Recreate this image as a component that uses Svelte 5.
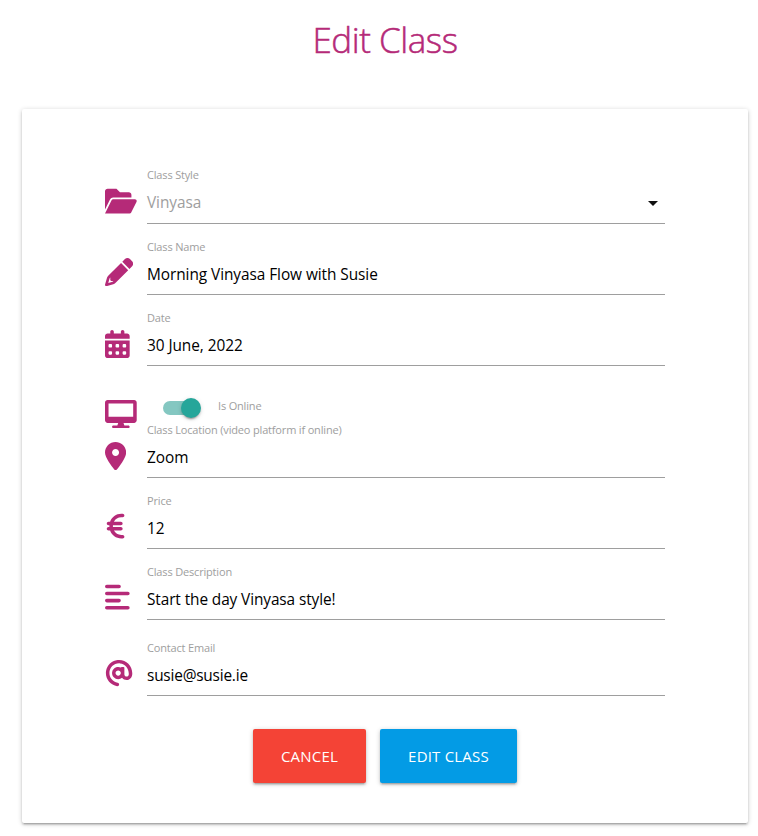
<script>
  const icons = {
    folder: { w: 576, d: 'M147.8 192H480V144C480 117.5 458.5 96 432 96h-160l-64-64h-160C21.49 32 0 53.49 0 80v328.4l90.54-181.1C101.4 205.6 123.4 192 147.8 192zM543.1 224H147.8C135.7 224 124.6 230.8 119.2 241.7L0 480h447.1c12.12 0 23.2-6.852 28.62-17.69l96-192C583.2 249 567.7 224 543.1 224z' },
    pencil: { w: 512, d: 'M421.7 220.3L188.5 453.4L154.6 419.5L158.1 416H112C103.2 416 96 408.8 96 400V353.9L92.51 357.4C87.78 362.2 84.31 368 82.42 374.4L59.44 452.6L137.6 429.6C143.1 427.7 149.8 424.2 154.6 419.5L188.5 453.4C178.1 463.8 165.2 471.5 151.1 475.6L30.77 511C22.35 513.5 13.24 511.2 7.03 504.1C.8198 498.8-1.502 489.7 .976 481.2L36.37 360.9C40.53 346.8 48.16 333.9 58.57 323.5L291.7 90.34L421.7 220.3zM492.7 58.75C517.7 83.74 517.7 124.3 492.7 149.3L444.3 197.7L314.3 67.72L362.7 19.32C387.7-5.678 428.3-5.678 453.3 19.32L492.7 58.75z' },
    calendar: { w: 448, d: 'M160 32V64H288V32C288 14.33 302.3 0 320 0C337.7 0 352 14.33 352 32V64H400C426.5 64 448 85.49 448 112V160H0V112C0 85.49 21.49 64 48 64H96V32C96 14.33 110.3 0 128 0C145.7 0 160 14.33 160 32zM0 192H448V464C448 490.5 426.5 512 400 512H48C21.49 512 0 490.5 0 464V192z' + [64, 192, 320].flatMap((x) => [256, 384].map((y) => `M${x} ${y + 48}c0 8.8 7.2 16 16 16h32c8.8 0 16-7.2 16-16v-32c0-8.8-7.2-16-16-16h-32c-8.8 0-16 7.2-16 16z`)).join('') },
    desktop: { w: 576, d: 'M528 0h-480C21.5 0 0 21.5 0 48v320C0 394.5 21.5 416 48 416h192L224 464H152C138.8 464 128 474.8 128 488S138.8 512 152 512h272c13.25 0 24-10.75 24-24s-10.75-24-24-24H352L336 416h192c26.5 0 48-21.5 48-48v-320C576 21.5 554.5 0 528 0zM512 304H64V64h448V304z' },
    location: { w: 384, d: 'M168.3 499.2C116.1 435 0 279.4 0 192C0 85.96 85.96 0 192 0C298 0 384 85.96 384 192C384 279.4 267 435 215.7 499.2C203.4 514.5 180.6 514.5 168.3 499.2zM192 256C227.3 256 256 227.3 256 192C256 156.7 227.3 128 192 128C156.7 128 128 156.7 128 192C128 227.3 156.7 256 192 256z' },
    euro: { w: 384, d: 'M64 240C46.33 240 32 225.7 32 208C32 190.3 46.33 176 64 176H92.29C121.9 92.11 201.1 32 296 32H320C337.7 32 352 46.33 352 64C352 81.67 337.7 96 320 96H296C238.1 96 187.8 128.4 162.1 176H288C305.7 176 320 190.3 320 208C320 225.7 305.7 240 288 240H144.2C144.1 242.6 144 245.3 144 248V264C144 266.7 144.1 269.4 144.2 272H288C305.7 272 320 286.3 320 304C320 321.7 305.7 336 288 336H162.1C187.8 383.6 238.1 416 296 416H320C337.7 416 352 430.3 352 448C352 465.7 337.7 480 320 480H296C201.1 480 121.9 419.9 92.29 336H64C46.33 336 32 321.7 32 304C32 286.3 46.33 272 64 272H80.15C80.05 269.3 80 266.7 80 264V248C80 245.3 80.05 242.7 80.15 240H64z' },
    align: { w: 448, d: 'M32 32H256a32 32 0 0 1 0 64H32a32 32 0 0 1 0-64zM32 160H416a32 32 0 0 1 0 64H32a32 32 0 0 1 0-64zM32 288H256a32 32 0 0 1 0 64H32a32 32 0 0 1 0-64zM32 416H416a32 32 0 0 1 0 64H32a32 32 0 0 1 0-64z' },
    at: { w: 512, d: 'M207.8 20.73c-93.45 18.32-168.7 93.66-187 187.1c-27.64 140.9 68.65 266.2 199.1 285.1c19.01 2.888 36.17-12.26 36.17-31.49l.0001-.6631c0-15.74-11.44-28.88-26.84-31.24c-84.35-12.98-149.2-86.13-149.2-174.2c0-102.9 88.61-185.5 193.4-175.4c91.54 8.869 158.6 91.25 158.6 183.2l0 16.16c0 22.09-17.94 40.05-40 40.05s-40.01-17.96-40.01-40.05v-120.1c0-8.847-7.161-16.02-16.01-16.02l-31.98 .0036c-7.299 0-13.2 4.992-15.12 11.68c-24.85-12.15-54.24-16.38-86.06-5.106c-38.75 13.73-68.12 48.91-73.72 89.64c-9.483 69.01 43.81 128 110.9 128c26.44 0 50.43-9.544 69.59-24.88c24 31.3 65.23 48.69 109.4 37.49C465.2 369.3 496 324.1 495.1 277.2V256.3C495.1 107.1 361.2-9.332 207.8 20.73zM239.1 304.3c-26.47 0-48-21.56-48-48.05s21.53-48.05 48-48.05s48 21.56 48 48.05S266.5 304.3 239.1 304.3z' }
  };
</script>

{#snippet icon(name)}
  <svg class="icon" viewBox="0 0 {icons[name].w} 512" width={(icons[name].w * 28.2) / 512} height="28.2" aria-hidden="true">
    <path fill-rule={name === 'pencil' ? 'nonzero' : 'evenodd'} d={icons[name].d} />
  </svg>
{/snippet}

{#snippet field(name, label, value, kind)}
  <div class="row {kind}">
    <div class="prefix">{@render icon(name)}</div>
    <div class="field">
      <div class="label"><span>{label}</span></div>
      <div class="value">
        <span>{value}</span>
        {#if kind === 'select'}
          <svg class="caret" width="10" height="5" viewBox="0 0 10 5"><path d="M0 0h10L5 5z" /></svg>
        {/if}
      </div>
    </div>
  </div>
{/snippet}

<main>
  <h1>Edit Class</h1>
  <section class="card">
    {@render field('folder', 'Class Style', 'Vinyasa', 'select')}
    {@render field('pencil', 'Class Name', 'Morning Vinyasa Flow with Susie', 'name')}
    {@render field('calendar', 'Date', '30 June, 2022', 'date')}
    <div class="online">
      <div class="prefix">{@render icon('desktop')}</div>
      <div class="switch"><i></i></div>
      <div class="label"><span>Is Online</span></div>
    </div>
    {@render field('location', 'Class Location (video platform if online)', 'Zoom', 'location')}
    {@render field('euro', 'Price', '12', 'price')}
    {@render field('align', 'Class Description', 'Start the day Vinyasa style!', 'description')}
    {@render field('at', 'Contact Email', 'susie@susie.ie', 'email')}
    <div class="actions">
      <button class="cancel">CANCEL</button>
      <button class="edit">EDIT CLASS</button>
    </div>
  </section>
</main>

<style>
  :global(body) {
    background: #fff;
    overflow: hidden;
  }
  main {
    height: 836px;
    width: 758px;
    overflow: hidden;
    font-family: 'Open Sans', 'Noto Sans', sans-serif;
  }
  h1 {
    margin: 0;
    height: 80px;
    padding: 0 0 29px 12px;
    text-align: center;
    font-size: 35px;
    font-weight: 300;
    letter-spacing: -0.45px;
    line-height: 80px;
    color: #b52a78;
    -webkit-text-stroke: 0.5px #b52a78;
  }
  .card {
    box-sizing: border-box;
    width: 726px;
    height: 714px;
    margin-left: 22px;
    padding: 58px 83px 0;
    border-radius: 2px;
    background: #fff;
    box-shadow: 0 2px 2px 0 rgba(0, 0, 0, 0.14), 0 3px 1px -2px rgba(0, 0, 0, 0.12), 0 1px 5px 0 rgba(0, 0, 0, 0.2);
  }
  .row {
    display: flex;
    height: 57px;
    margin-bottom: 14px;
  }
  .prefix {
    flex: 0 0 42px;
    padding-top: 20px;
  }
  .date .prefix,
  .location .prefix {
    padding-top: 21px;
  }
  .icon {
    display: block;
    fill: #b52a78;
  }
  .field {
    flex: 1;
    box-sizing: border-box;
    height: 57px;
    border-bottom: 1px solid #9e9e9e;
  }
  .label {
    height: 16px;
    font-size: 11px;
    line-height: 18px;
    letter-spacing: -0.17px;
    color: #9e9e9e;
    white-space: nowrap;
  }
  .value {
    display: flex;
    align-items: center;
    justify-content: space-between;
    height: 40px;
    padding-top: 1px;
    font-size: 15.4px;
    letter-spacing: -0.06px;
    line-height: 40px;
    color: #000;
    white-space: nowrap;
  }
  .select .label {
    line-height: 16px;
  }
  .select .value {
    padding-top: 0;
    color: #9e9e9e;
  }
  .email .value {
    letter-spacing: -0.2px;
  }
  .description .value {
    letter-spacing: -0.1px;
  }
  .caret {
    margin-right: 7px;
    fill: #111;
  }
  .online {
    display: flex;
    height: 55px;
    margin-top: -14px;
  }
  .online .prefix {
    flex-basis: 58px;
    padding-top: 34px;
  }
  .switch {
    flex: 0 0 55px;
    padding-top: 35px;
    height: 14px;
  }
  .switch::before {
    content: '';
    display: block;
    width: 36px;
    height: 14px;
    border-radius: 7px;
    background: #84c7c1;
  }
  .switch i {
    display: block;
    position: relative;
    top: -17px;
    left: 18px;
    width: 20px;
    height: 20px;
    border-radius: 50%;
    background: #26a69a;
    box-shadow: 0 3px 1px -2px rgba(0, 0, 0, 0.2), 0 2px 2px 0 rgba(0, 0, 0, 0.14), 0 1px 5px 0 rgba(0, 0, 0, 0.12);
  }
  .online .label {
    padding-top: 32px;
    line-height: 16px;
  }
  .description {
    margin-bottom: 19px;
  }
  .email {
    margin-bottom: 33px;
  }
  .actions {
    display: flex;
    gap: 14px;
    padding-left: 148px;
  }
  button {
    height: 54px;
    padding: 0;
    border: 0;
    border-radius: 2px;
    color: #fff;
    font: 15px/54px 'Open Sans', 'Noto Sans', sans-serif;
    letter-spacing: 0.2px;
    box-shadow: 0 2px 2px 0 rgba(0, 0, 0, 0.14), 0 3px 1px -2px rgba(0, 0, 0, 0.12), 0 1px 5px 0 rgba(0, 0, 0, 0.2);
  }
  .cancel {
    width: 113px;
    background: #f44336;
  }
  .edit {
    width: 137px;
    background: #039be5;
  }
</style>
